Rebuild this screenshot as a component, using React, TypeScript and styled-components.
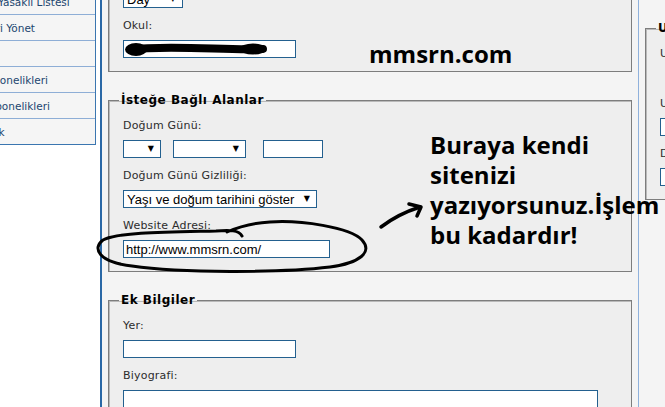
import styled, { createGlobalStyle } from 'styled-components'

const GlobalStyle = createGlobalStyle`
  html, body {
    margin: 0;
    padding: 0;
    background: #fff;
    overflow: hidden;
  }
`

const Viewport = styled.div`
  position: relative;
  width: 665px;
  height: 407px;
  overflow: hidden;
  font-family: 'DejaVu Sans', Verdana, sans-serif;
`

// the page is scrolled a bit, so the top of every column is off screen
const Page = styled.div`
  display: flex;
  align-items: flex-start;
  margin-top: -66px;
  width: max-content;
`

const Sidebar = styled.div`
  flex-shrink: 0;
  width: 96px;
  margin-top: 3px;
  box-sizing: border-box;
  background: #f5f5f5;
  border-right: 1px solid #3b76b0;
  border-bottom: 1px solid #3b76b0;
`

const NavItem = styled.div`
  height: 25px;
  display: flex;
  align-items: center;
  overflow: hidden;
  white-space: nowrap;
  border-bottom: 1px solid #8eaed6;
  font-size: 10.5px;
  color: #22466f;
  &:last-child {
    border-bottom: none;
  }
`

const NavText = styled.span<{ $shift: number }>`
  margin-left: ${(p) => p.$shift}px;
`

const Main = styled.div`
  flex-shrink: 0;
  width: 539px;
  min-height: 520px;
  margin-left: 4px;
  box-sizing: border-box;
  padding-top: 8px;
  background: #f4f4f4;
  border-left: 2px solid #2a68a6;
  border-right: 1px solid #8fb1dc;
`

const RightCol = styled.div`
  flex-shrink: 0;
  width: 220px;
  min-height: 520px;
  padding-top: 86px;
  background: #f4f4f4;
`

const Fieldset = styled.fieldset`
  margin: 20px 6px 0;
  padding: 11px 14px 13px;
  background: #eeeeee;
  border: 1px solid #7d7d7d;
  box-shadow: inset 1px 1px 0 #b9b9b9;
  &:first-child {
    margin-top: 0;
  }
`

const Legend = styled.legend`
  margin-left: -4px;
  padding: 0 2px;
  font-size: 12px;
  line-height: 16px;
  font-weight: bold;
  letter-spacing: 0.5px;
  color: #000;
`

const Field = styled.div`
  margin-bottom: 11px;
  &:last-child {
    margin-bottom: 0;
  }
`

const Label = styled.div`
  height: 14px;
  margin-bottom: 7px;
  font-size: 11px;
  line-height: 14px;
  letter-spacing: 0.2px;
  color: #2c2c2c;
  white-space: nowrap;
`

const Row = styled.div`
  display: flex;
  gap: 12px;
  height: 18px;
  white-space: nowrap;
`

const Select = styled.div<{ $w: number }>`
  position: relative;
  display: flex;
  align-items: center;
  justify-content: space-between;
  width: ${(p) => p.$w}px;
  height: 18px;
  box-sizing: border-box;
  padding: 0 6px 0 3px;
  background: #fff;
  border: 1px solid #23608f;
  font-family: 'Liberation Sans', Arial, sans-serif;
  font-size: 13px;
  color: #000;
`

const Caret = styled.span`
  font-family: 'DejaVu Sans', sans-serif;
  font-size: 8px;
  line-height: 1;
`

const TextInput = styled.input<{ $w: number; $gap?: number }>`
  display: block;
  width: ${(p) => p.$w}px;
  height: 18px;
  margin: 0 0 0 ${(p) => p.$gap ?? 0}px;
  box-sizing: border-box;
  padding: 0 2px;
  background: #fff;
  border: 1px solid #23608f;
  border-radius: 0;
  outline: none;
  font-family: 'Liberation Sans', Arial, sans-serif;
  font-size: 13px;
  color: #000;
`

const Redacted = styled.div`
  position: relative;
  width: 173px;
  svg {
    position: absolute;
    left: 0;
    top: 0;
  }
`

const TextArea = styled.textarea`
  display: block;
  width: 475px;
  height: 70px;
  margin: 0;
  box-sizing: border-box;
  background: #fff;
  border: 1px solid #23608f;
  border-radius: 0;
  resize: none;
  outline: none;
`

const Options = styled.div`
  height: 18px;
  padding-left: 24px;
  font-size: 11px;
  line-height: 18px;
  color: #333;
  white-space: nowrap;
`

// hand-written notes lying over the form
const SiteMark = styled.div`
  position: absolute;
  left: 369px;
  top: 39px;
  font-family: 'Open Sans', sans-serif;
  font-weight: 700;
  font-size: 24px;
  line-height: 30px;
  color: #000;
`

const Callout = styled.div`
  position: absolute;
  left: 430px;
  top: 130px;
  font-family: 'Open Sans', sans-serif;
  font-weight: 700;
  font-size: 24px;
  line-height: 30px;
  color: #000;
  white-space: nowrap;
`

const Marks = styled.svg`
  position: absolute;
  left: 0;
  top: 0;
  pointer-events: none;
`

const navItems = [
  { text: 'Profil Alanları', shift: 4 },
  { text: 'Kullanıcı Grupları', shift: 4 },
  { text: 'Yasaklı Listesi', shift: -2 },
  { text: 'Üyeleri Yönet', shift: -34 },
  { text: 'Ayarlar', shift: -60 },
  { text: 'Abonelikleri', shift: -14 },
  { text: 'Abonelikleri', shift: -12 },
  { text: 'Yedek', shift: -26 },
]

export default function App() {
  return (
    <>
      <GlobalStyle />
      <Viewport>
        <Page>
          <Sidebar>
            {navItems.map((item, i) => (
              <NavItem key={i}>
                <NavText $shift={item.shift}>{item.text}</NavText>
              </NavItem>
            ))}
          </Sidebar>

          <Main>
            <Fieldset>
              <Legend>Kişisel Bilgiler</Legend>
              <Field>
                <Label>Doğum Tarihi:</Label>
                <Row>
                  <Select $w={60}>
                    Day <Caret>▼</Caret>
                  </Select>
                </Row>
              </Field>
              <Field>
                <Label>Okul:</Label>
                <Redacted>
                  <TextInput $w={173} readOnly defaultValue="" />
                  <svg width="173" height="18" viewBox="0 0 173 18">
                    <ellipse cx="13" cy="9.5" rx="11" ry="6.5" fill="#000" />
                    <path
                      d="M8 9.5 C 30 6.5, 60 7.5, 90 8.5 S 125 9.5, 140 9"
                      stroke="#000"
                      strokeWidth="8"
                      strokeLinecap="round"
                      fill="none"
                    />
                    <ellipse cx="130" cy="9" rx="13" ry="5.5" fill="#000" />
                  </svg>
                </Redacted>
              </Field>
            </Fieldset>

            <Fieldset>
              <Legend>İsteğe Bağlı Alanlar</Legend>
              <Field>
                <Label>Doğum Günü:</Label>
                <Row>
                  <Select $w={38}>
                    <span />
                    <Caret>▼</Caret>
                  </Select>
                  <Select $w={73}>
                    <span />
                    <Caret>▼</Caret>
                  </Select>
                  <TextInput $w={60} $gap={5} readOnly defaultValue="" />
                </Row>
              </Field>
              <Field>
                <Label>Doğum Günü Gizliliği:</Label>
                <Select $w={194}>
                  Yaşı ve doğum tarihini göster <Caret>▼</Caret>
                </Select>
              </Field>
              <Field>
                <Label>Website Adresi:</Label>
                <TextInput $w={207} readOnly defaultValue="http://www.mmsrn.com/" />
              </Field>
            </Fieldset>

            <Fieldset>
              <Legend>Ek Bilgiler</Legend>
              <Field>
                <Label>Yer:</Label>
                <TextInput $w={173} readOnly defaultValue="" />
              </Field>
              <Field>
                <Label>Biyografi:</Label>
                <TextArea readOnly defaultValue="" />
              </Field>
            </Fieldset>
          </Main>

          <RightCol>
            <Fieldset>
              <Legend>Uygulama Ayarları</Legend>
              <Field>
                <Label>Uyarılar:</Label>
                <Options>Evet / Hayır</Options>
              </Field>
              <Field>
                <Label>Unvan:</Label>
                <TextInput $w={160} readOnly defaultValue="" />
              </Field>
              <Field>
                <Label>Dil:</Label>
                <TextInput $w={160} readOnly defaultValue="" />
              </Field>
            </Fieldset>
          </RightCol>
        </Page>

        <SiteMark>mmsrn.com</SiteMark>
        <Callout>
          Buraya kendi
          <br />
          sitenizi
          <br />
          yazıyorsunuz.İşlem
          <br />
          bu kadardır!
        </Callout>

        <Marks width="665" height="407" viewBox="0 0 665 407">
          {/* loop round the website field */}
          <path
            d="M242 236 C 239 230, 230 230, 216 231 C 170 232, 118 232, 103 240 C 92 248, 98 262, 132 266 C 180 273, 280 273, 330 267 C 360 263, 373 252, 362 240 C 350 227, 300 220, 270 222 C 250 223, 236 228, 227 232"
            stroke="#000"
            strokeWidth="3"
            strokeLinecap="round"
            fill="none"
          />
          {/* arrow towards the note */}
          <path
            d="M381 227 Q 398 214, 420 207"
            stroke="#000"
            strokeWidth="3.5"
            strokeLinecap="round"
            fill="none"
          />
          <path
            d="M409 204 L 421 207 L 417 216"
            stroke="#000"
            strokeWidth="3.5"
            strokeLinecap="round"
            strokeLinejoin="round"
            fill="none"
          />
        </Marks>
      </Viewport>
    </>
  )
}
